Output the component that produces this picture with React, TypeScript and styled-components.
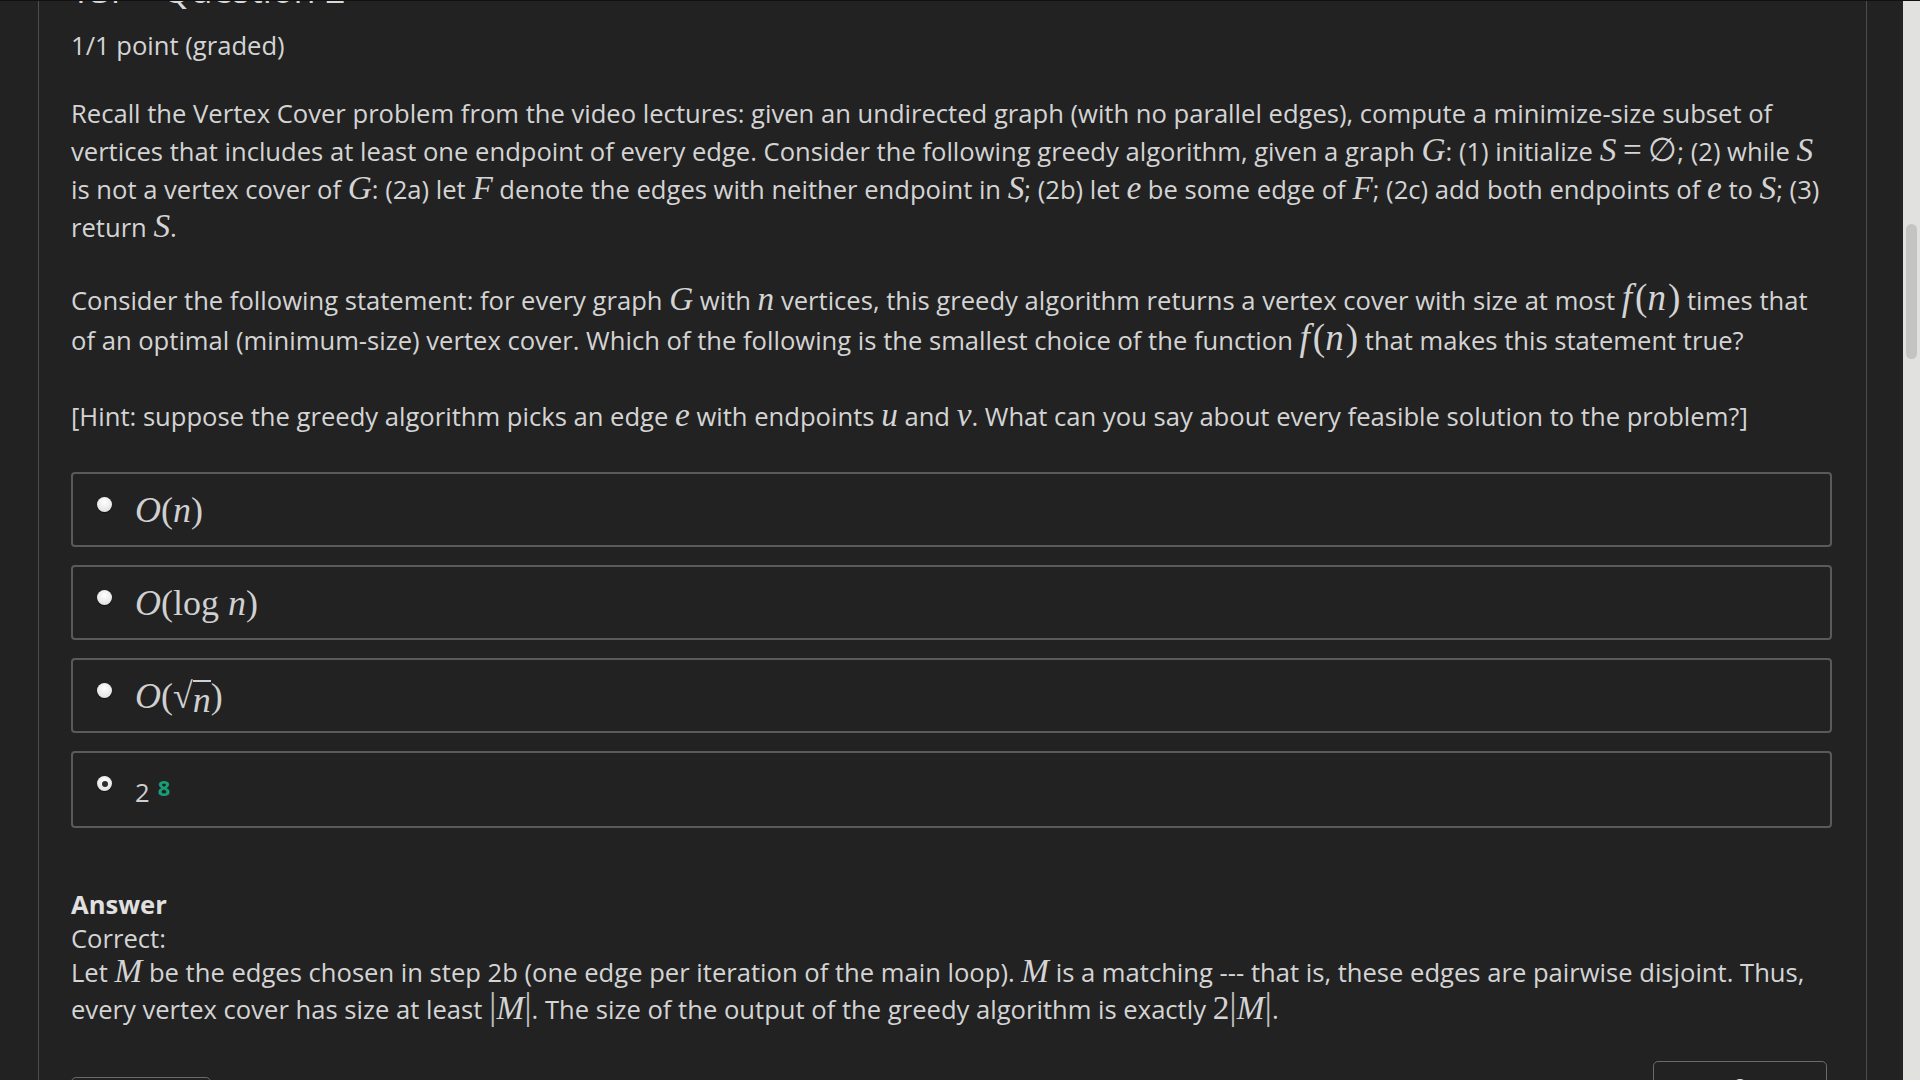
import React from 'react'
import styled, { createGlobalStyle } from 'styled-components'

const GlobalStyle = createGlobalStyle`
  html, body {
    margin: 0;
    padding: 0;
    background: #222222;
    overflow: hidden;
  }
  body {
    font-family: "Open Sans", "Noto Sans", sans-serif;
    color: #d4d4d4;
  }
`

const Frame = styled.div`
  display: flex;
  height: 1080px;
  border-top: 1px solid #111;
  box-sizing: border-box;
  background: #222222;
  overflow: hidden;
`

const Gutter = styled.div`
  width: 38px;
  flex: none;
  border-right: 1px solid #4d4d4d;
`

const Main = styled.main`
  flex: 1;
  min-width: 0;
  border-right: 1px solid #4d4d4d;
  padding: 0 34px 0 32px;
  font-size: 25.6px;
`

const Spacer = styled.div`
  width: 36px;
  flex: none;
`

const ScrollTrack = styled.div`
  width: 17px;
  flex: none;
  background: #e1e1e0;
  display: flex;
  justify-content: center;
`

const ScrollThumb = styled.div`
  width: 11px;
  height: 135px;
  margin-top: 223px;
  border-radius: 6px;
  background: #c4c4c4;
`

const Title = styled.h2`
  margin: -33px 0 0;
  font-size: 36px;
  line-height: 44px;
  font-weight: 400;
  color: #d8d8d8;
`

const Meta = styled.div`
  margin-top: 15px;
  line-height: 38px;
`

const Para = styled.p<{ $gap: number; $lh?: number }>`
  margin: ${p => p.$gap}px 0 0;
  line-height: ${p => p.$lh ?? 38}px;
`

const Var = styled.span<{ $size?: number; $pad?: number }>`
  font-family: "Liberation Serif", "DejaVu Serif", serif;
  font-style: italic;
  font-size: ${p => p.$size ?? 1.3}em;
  line-height: 0;
  padding-right: ${p => p.$pad ?? 0}px;
`

const Up = styled.span<{ $size?: number }>`
  font-family: "Liberation Serif", "DejaVu Serif", serif;
  font-size: ${p => p.$size ?? 1.3}em;
  line-height: 0;
`

const Options = styled.div`
  display: flex;
  flex-direction: column;
  gap: 18px;
  margin-top: 36px;
`

const Choice = styled.label<{ $h: number }>`
  display: flex;
  align-items: flex-start;
  gap: 23px;
  height: ${p => p.$h}px;
  box-sizing: border-box;
  border: 2px solid #5a5a5a;
  border-radius: 4px;
  padding: 14px 24px 0;
`

const Radio = styled.span<{ $checked?: boolean }>`
  flex: none;
  width: 15px;
  height: 15px;
  margin-top: 9px;
  border-radius: 50%;
  box-sizing: border-box;
  background: radial-gradient(circle at 50% 35%, #ffffff, #d9d9d9);
  box-shadow: 0 1px 1px rgba(0, 0, 0, 0.5);
  display: flex;
  align-items: center;
  justify-content: center;

  &::after {
    content: '';
    display: ${p => (p.$checked ? 'block' : 'none')};
    width: 6px;
    height: 6px;
    border-radius: 50%;
    background: #2a2f33;
  }
`

const ChoiceMath = styled.span`
  font-family: "Liberation Serif", "DejaVu Serif", serif;
  font-size: 36px;
  line-height: 44px;
  color: #d0d0d0;
`

const Root = styled.span`
  display: inline-flex;
  align-items: flex-start;
`

const RootBar = styled.span`
  border-top: 2px solid #d0d0d0;
  margin-top: 6px;
  line-height: 36px;
  font-style: italic;
`

const PlainChoice = styled.span`
  line-height: 44px;
  padding-top: 4px;
  color: #cfcfcf;
`

const Mark = styled.sup`
  margin-left: 8px;
  font-size: 22px;
  line-height: 1;
  font-weight: 700;
  color: #169e78;
  vertical-align: 6px;
`

const AnswerBlock = styled.section`
  margin-top: 60px;
  line-height: 34px;
`

const AnswerTitle = styled.div`
  font-weight: 700;
  color: #e0e0e0;
`

const Explanation = styled.div`
  line-height: 37px;
  margin-top: -2px;
`

const Footer = styled.div`
  display: flex;
  justify-content: space-between;
  align-items: flex-start;
  margin-top: 33px;
  padding-right: 5px;
`

const Button = styled.button<{ $w: number; $drop?: number }>`
  width: ${p => p.$w}px;
  height: 60px;
  margin-top: ${p => p.$drop ?? 0}px;
  background: transparent;
  border: 1px solid #6a6a6a;
  border-radius: 5px;
  color: #d4d4d4;
  font-family: inherit;
  font-size: 20px;
  display: flex;
  justify-content: center;
  align-items: flex-start;
  padding-top: 16px;
`

const Abs = styled.span`
  font-family: "Liberation Serif", "DejaVu Serif", serif;
  font-size: 1.45em;
  font-weight: 300;
  line-height: 0;
  color: #bdbdbd;
`

// f(n) as MathJax sets it: wider than plain serif, so a little padding
function Fn() {
  return (
    <>
      <Var $size={1.45} $pad={3}>f</Var>
      <Up $size={1.45}>(</Up>
      <Var $size={1.45} $pad={2}>n</Var>
      <Up $size={1.45}>)</Up>
    </>
  )
}

export default function App() {
  return (
    <>
      <GlobalStyle />
      <Frame>
        <Gutter />
        <Main>
          <Title>TSP - Question 2</Title>
          <Meta>1/1 point (graded)</Meta>

          <Para $gap={30}>
            Recall the Vertex Cover problem from the video lectures: given an undirected graph (with no
            parallel edges), compute a minimize-size subset of vertices that includes at least one endpoint
            of every edge. Consider the following greedy algorithm, given a graph <Var>G</Var>: (1) initialize{' '}
            <Var>S</Var> <Up>=</Up> <Up>∅</Up>; (2) while <Var>S</Var> is not a vertex cover of <Var>G</Var>: (2a)
            let <Var>F</Var> denote the edges with neither endpoint in <Var>S</Var>; (2b) let <Var>e</Var> be some
            edge of <Var>F</Var>; (2c) add both endpoints of <Var>e</Var> to <Var>S</Var>; (3) return <Var>S</Var>.
          </Para>

          <Para $gap={34} $lh={40}>
            Consider the following statement: for every graph <Var>G</Var> with <Var>n</Var> vertices, this greedy
            algorithm returns a vertex cover with size at most <Fn /> times that of an optimal (minimum-size)
            vertex cover. Which of the following is the smallest choice of the function <Fn /> that makes this
            statement true?
          </Para>

          <Para $gap={37}>
            [Hint: suppose the greedy algorithm picks an edge <Var>e</Var> with endpoints <Var>u</Var> and{' '}
            <Var>v</Var>. What can you say about every feasible solution to the problem?]
          </Para>

          <Options>
            <Choice $h={75}>
              <Radio />
              <ChoiceMath>
                <i>O</i>(<i>n</i>)
              </ChoiceMath>
            </Choice>
            <Choice $h={75}>
              <Radio />
              <ChoiceMath>
                <i>O</i>(log <i>n</i>)
              </ChoiceMath>
            </Choice>
            <Choice $h={75}>
              <Radio />
              <ChoiceMath>
                <i>O</i>(
                <Root>
                  √<RootBar>n</RootBar>
                </Root>
                )
              </ChoiceMath>
            </Choice>
            <Choice $h={77}>
              <Radio $checked />
              <PlainChoice>
                2<Mark>8</Mark>
              </PlainChoice>
            </Choice>
          </Options>

          <AnswerBlock>
            <AnswerTitle>Answer</AnswerTitle>
            <div>Correct:</div>
            <Explanation>
              Let <Var>M</Var> be the edges chosen in step 2b (one edge per iteration of the main loop).{' '}
              <Var>M</Var> is a matching --- that is, these edges are pairwise disjoint. Thus, every vertex cover
              has size at least <Abs>|</Abs>
              <Var>M</Var>
              <Abs>|</Abs>. The size of the output of the greedy algorithm is exactly <Up>2</Up>
              <Abs>|</Abs>
              <Var>M</Var>
              <Abs>|</Abs>.
            </Explanation>
          </AnswerBlock>

          <Footer>
            <Button $w={140} $drop={16}>Submit</Button>
            <Button $w={174}>
              <svg width="16" height="16" viewBox="0 0 16 16">
                <circle cx="8" cy="8" r="7" fill="#e6e6e6" />
              </svg>
            </Button>
          </Footer>
        </Main>
        <Spacer />
        <ScrollTrack>
          <ScrollThumb />
        </ScrollTrack>
      </Frame>
    </>
  )
}
